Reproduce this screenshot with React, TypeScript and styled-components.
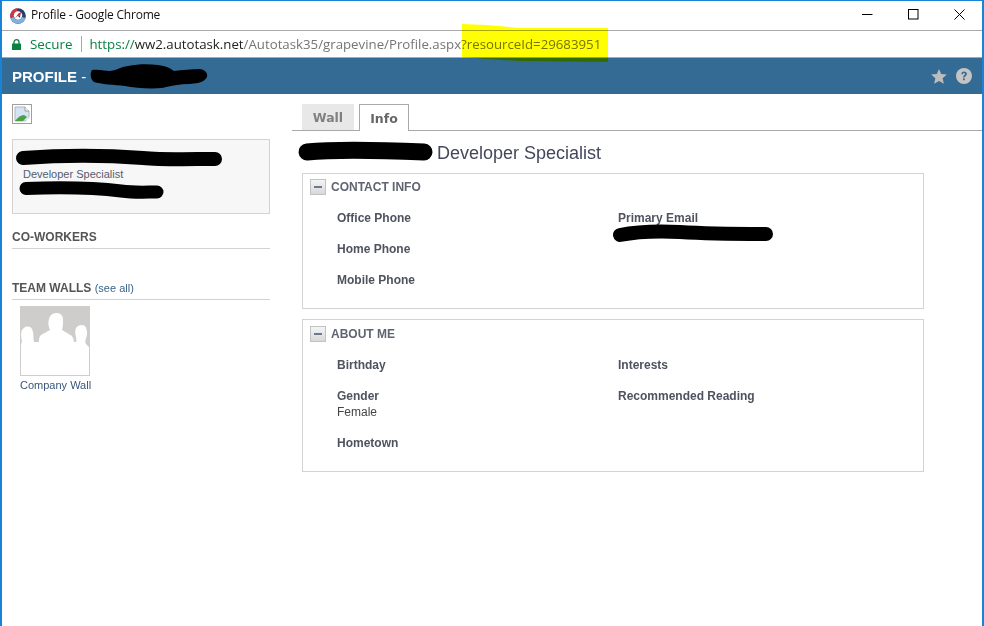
import React from "react";
import styled, { createGlobalStyle } from "styled-components";

const Global = createGlobalStyle`
  html, body { margin: 0; padding: 0; background: #fff; }
  body { font-family: "Liberation Sans", Arial, sans-serif; }
`;

const Win = styled.div`
  width: 984px; height: 626px; box-sizing: border-box; overflow: hidden; position: relative;
  border: 2px solid #1883d7; border-top-width: 1px; border-bottom: 0; background: #fff;
  display: flex; flex-direction: column;
`;
const TitleBar = styled.div`
  height: 30px; flex: none; box-sizing: border-box; border-bottom: 1px solid #a9a9a9; padding-left: 8px;
  display: flex; align-items: center; gap: 5px;
  font: 12px "Open Sans", "Noto Sans", sans-serif; color: #111; letter-spacing: -.2px;
`;
const TitleText = styled.span`flex: 1; position: relative; top: -1px;`;
const WinBtns = styled.div`display: flex; align-items: center; height: 100%;`;
const WinBtn = styled.div`width: 46px; height: 100%; display: flex; align-items: center; justify-content: center; position: relative; top: -1px;`;
const UrlBar = styled.div`
  height: 27px; flex: none; box-sizing: border-box; border-bottom: 1px solid #a9a9a9; padding-left: 10px;
  display: flex; align-items: center; position: relative;
  font: 13.26px "Open Sans", "Noto Sans", sans-serif; white-space: nowrap;
`;
const Secure = styled.span`color: #0b8043; margin-left: 9px; font-size: 13.4px;`;
const Sep = styled.span`width: 1px; height: 16px; background: #a9a9a9; margin: 0 7px 0 9px;`;
const Url = styled.span`color: #757575;`;
const UrlScheme = styled.span`color: #0b8043;`;
const UrlHost = styled.span`color: #222;`;
const Highlight = styled.svg`position: absolute; left: 460px; top: 23px; mix-blend-mode: multiply; pointer-events: none;`;
const Header = styled.div`
  height: 36px; flex: none; background: #346b95; display: flex; align-items: center; justify-content: space-between;
  padding: 0 10px; color: #fff; position: relative;
`;
const HeaderTitle = styled.div`font-size: 15px; font-weight: 700;`;
const HeaderDash = styled.span`font-weight: 400;`;
const HeaderIcons = styled.div`display: flex; align-items: center; gap: 9px;`;
const Body = styled.div`flex: 1; display: flex; position: relative;`;
const Left = styled.aside`width: 258px; margin-left: 10px; padding-top: 10px; flex: none; display: flex; flex-direction: column;`;
const Broken = styled.svg`display: block; margin-bottom: 15px;`;
const Card = styled.div`
  height: 75px; box-sizing: border-box; border: 1px solid #d3d3d3; background: #f7f7f7;
  padding: 28px 0 0 10px; font-size: 11px; color: #555b6e; position: relative;
`;
const SideHead = styled.div`
  font-size: 12px; font-weight: 700; color: #555; border-bottom: 1px solid #d3d3d3;
  padding-bottom: 4px; line-height: 14px;
`;
const CoHead = styled(SideHead)`margin-top: 16px;`;
const WallsHead = styled(SideHead)`margin-top: 32px;`;
const SeeAll = styled.span`font-size: 11px; font-weight: 400; color: #39648a;`;
const Tile = styled.div`margin: 6px 0 0 8px; width: 70px;`;
const TileArt = styled.svg`display: block;`;
const TileName = styled.div`font-size: 11px; color: #39567a; margin-top: 3px; white-space: nowrap; line-height: 13px;`;
const Right = styled.main`flex: 1; margin-left: 22px; padding-top: 10px; display: flex; flex-direction: column;`;
const Tabs = styled.div`display: flex; gap: 5px; padding-left: 10px; border-bottom: 1px solid #a9a9a9; height: 26px;`;
const Tab = styled.div<{ $active?: boolean }>`
  box-sizing: border-box; height: ${p => (p.$active ? 27 : 26)}px; width: ${p => (p.$active ? 50 : 52)}px;
  display: flex; align-items: center; justify-content: center;
  font: 700 12.5px "DejaVu Sans", sans-serif; color: ${p => (p.$active ? "#666" : "#808080")};
  background: ${p => (p.$active ? "#fff" : "#e8e8e8")};
  ${p => p.$active && "border: 1px solid #a9a9a9; border-bottom: 0;"}
`;
const Heading = styled.h1`
  margin: 11px 0 9px 145px; font-size: 18px; font-weight: 400; color: #44475a; line-height: 22px;
`;
const Section = styled.section<{ $h: number; $top: number }>`
  margin: 0 0 10px 10px; width: 622px; height: ${p => p.$h}px; box-sizing: border-box;
  border: 1px solid #d3d3d3; padding: ${p => p.$top}px 7px 5px;
`;
const SectionHead = styled.div`
  display: flex; align-items: center; gap: 5px; font-size: 12px; font-weight: 700; color: #5f6470; height: 16px;
`;
const Toggle = styled.div`
  width: 16px; height: 16px; box-sizing: border-box; border: 1px solid #c2c2c2;
  background: linear-gradient(#f4f4f4, #d8d8d8); display: flex; align-items: center; justify-content: center;
  &::after { content: ""; width: 8px; height: 2px; background: #6d7891; }
`;
const Fields = styled.div`display: grid; grid-template-columns: 281px 1fr; padding: 16px 0 0 27px;`;
const Col = styled.div`display: flex; flex-direction: column; gap: 17px;`;
const Field = styled.div`font-size: 12px; line-height: 14px; font-weight: 700; color: #4f5360;`;
const FieldValue = styled.div`font-weight: 400; color: #444; margin-top: 2px;`;
const Scribble = styled.svg<{ $x: number; $y: number }>`
  position: absolute; left: ${p => p.$x}px; top: ${p => p.$y}px; pointer-events: none; overflow: visible;
`;

const Stroke = ({ x, y, w, h, d, sw }: { x: number; y: number; w: number; h: number; d: string; sw: number }) => (
  <Scribble $x={x} $y={y} width={w} height={h} viewBox={`0 0 ${w} ${h}`}>
    <path d={d} fill="none" stroke="#000" strokeWidth={sw} strokeLinecap="round" strokeLinejoin="round" />
  </Scribble>
);

export default function App() {
  return (
    <Win>
      <Global />
      <TitleBar>
        <svg width="16" height="16" viewBox="0 0 16 16">
          <circle cx="8" cy="8" r="7.8" fill="#24406e" />
          <path d="M.4 9.5A7.8 7.8 0 0 1 7 .3L7.6 4A4.2 4.2 0 0 0 4 9Z" fill="#d8323c" />
          <path d="M.6 10A7.8 7.8 0 0 0 15.6 10L12 9A4.2 4.2 0 0 1 4 9Z" fill="#7fb2dc" />
          <circle cx="8" cy="7.5" r="4.2" fill="#fff" />
          <path d="M4.8 10.5L8.6 5.2L11.2 4L10.4 7L7.4 8Z" fill="#c92a35" />
          <path d="M7.4 8L10.4 7L10 10L8.6 8.6Z" fill="#24406e" />
        </svg>
        <TitleText>Profile - Google Chrome</TitleText>
        <WinBtns>
          <WinBtn><svg width="11" height="11"><path d="M0 5.5H10.5" stroke="#000" strokeWidth="1" /></svg></WinBtn>
          <WinBtn><svg width="11" height="11"><rect x=".5" y=".5" width="9.5" height="9.5" fill="none" stroke="#000" /></svg></WinBtn>
          <WinBtn><svg width="11" height="11"><path d="M.5 .5L10.5 10.5M10.5 .5L.5 10.5" stroke="#000" /></svg></WinBtn>
        </WinBtns>
      </TitleBar>
      <UrlBar>
        <svg width="9" height="11" viewBox="0 0 9 11">
          <path d="M2 5V3.2A2.5 2.5 0 0 1 7 3.2V5" fill="none" stroke="#0b8043" strokeWidth="1.3" />
          <rect y="4.5" width="9" height="6.5" rx=".6" fill="#0b8043" />
        </svg>
        <Secure>Secure</Secure>
        <Sep />
        <Url><UrlScheme>https://</UrlScheme><UrlHost>ww2.autotask.net</UrlHost>/Autotask35/grapevine/Profile.aspx?resourceId=29683951</Url>
      </UrlBar>
      <Header>
        <HeaderTitle>PROFILE <HeaderDash>-</HeaderDash></HeaderTitle>
        <HeaderIcons>
          <svg width="16" height="15" viewBox="0 0 16 15"><path d="M8 0L10.2 5.1L15.8 5.6L11.6 9.3L12.9 14.8L8 11.9L3.1 14.8L4.4 9.3L.2 5.6L5.8 5.1Z" fill="#bdbdbd" /></svg>
          <svg width="16" height="16" viewBox="0 0 16 16">
            <circle cx="8" cy="8" r="8" fill="#c4c4c4" />
            <path d="M5.3 6.2C5.4 4.5 6.6 3.6 8.1 3.6C9.7 3.6 10.9 4.5 10.9 5.9C10.9 7.9 8.6 7.8 8.6 9.6H7.1C7.1 7.2 9 7.2 9 6C9 5.4 8.6 5.1 8 5.1C7.4 5.1 7 5.5 6.9 6.3Z" fill="#346b95" />
            <rect x="7" y="10.4" width="1.8" height="1.8" fill="#346b95" />
          </svg>
        </HeaderIcons>
        <Scribble $x={88} $y={5} width={118} height={26} viewBox="0 0 118 26">
          <path d="M2 7C10 6 15 8 20 8C28 7 30 4 38 3C48 1 58 1 68 2C76 3 80 5 84 8C92 7 102 6 110 6C116 7 118 11 117 14C114 19 110 20 100 21C90 21 80 23 72 25C60 26 45 25 35 23C25 22 10 21 4 19C0 16 0 10 2 7Z" fill="#000" />
        </Scribble>
      </Header>
      <Highlight width="146" height="38" viewBox="0 0 146 38">
        <path d="M0 0L25 1L58 4L146 4V38L58 37L25 35L0 33Z" fill="#ffff00" />
      </Highlight>
      <Body>
        <Left>
          <Broken width="20" height="20" viewBox="0 0 20 20">
            <rect x=".5" y=".5" width="19" height="19" fill="#fff" stroke="#a0a0a0" />
            <path d="M3 3H13L17 7V17H3Z" fill="#d3e4f5" stroke="#b5b5b5" />
            <path d="M3 17C6 13 9 11 12 11L15 13L11 17Z" fill="#4f9d45" />
            <path d="M13 3V7H17" fill="#fff" stroke="#9a9a9a" />
            <path d="M12 19L19 12V19Z" fill="#fff" />
          </Broken>
          <Card>
            Developer Specialist
            <Stroke x={10} y={10} w={192} h={14} sw={14} d="M0 8C40 5 80 5 120 8C140 10 170 9 192 9" />
            <Stroke x={13} y={45} w={131} h={10} sw={13} d="M0 3.5C40 2 70 3 95 6C110 8 120 7 131 7" />
          </Card>
          <CoHead>CO-WORKERS</CoHead>
          <WallsHead>TEAM WALLS <SeeAll>(see all)</SeeAll></WallsHead>
          <Tile>
            <TileArt width="70" height="70" viewBox="0 0 70 70">
              <rect width="70" height="70" fill="#cfcccc" />
              <path d="M1 69V39L2 35C1 31 0 24 4 22C6 20 10 20 12 23C14 27 13 32 14 36H19C19 33 19 31 21 29L30 24C28 20 28 16 29 13C30 9 33 7 37 7C41 7 43 10 43 14C43 18 43 21 42 24L52 30C53 32 54 34 54 36H56C57 34 56 33 56 31C55 28 55 24 56 22C58 19 62 18 65 20C67 23 68 28 66 32C65 35 65 37 66 38L69 41V69Z" fill="#fff" />
            </TileArt>
            <TileName>Company Wall</TileName>
          </Tile>
        </Left>
        <Right>
          <Tabs>
            <Tab>Wall</Tab>
            <Tab $active>Info</Tab>
          </Tabs>
          <Heading>Developer Specialist</Heading>
          <Section $h={136} $top={5}>
            <SectionHead><Toggle />CONTACT INFO</SectionHead>
            <Fields>
              <Col>
                <Field>Office Phone</Field>
                <Field>Home Phone</Field>
                <Field>Mobile Phone</Field>
              </Col>
              <Col>
                <Field>Primary Email</Field>
              </Col>
            </Fields>
          </Section>
          <Section $h={153} $top={6}>
            <SectionHead><Toggle />ABOUT ME</SectionHead>
            <Fields>
              <Col>
                <Field>Birthday</Field>
                <Field>Gender<FieldValue>Female</FieldValue></Field>
                <Field>Hometown</Field>
              </Col>
              <Col>
                <Field>Interests</Field>
                <Field>Recommended Reading</Field>
              </Col>
            </Fields>
          </Section>
        </Right>
        <Stroke x={305} y={50} w={117} h={14} sw={17} d="M0 8C30 5 70 6 117 8" />
        <Stroke x={618} y={134} w={146} h={10} sw={14} d="M0 7C20 3 40 3 60 4C90 6 120 6 146 6" />
      </Body>
    </Win>
  );
}
